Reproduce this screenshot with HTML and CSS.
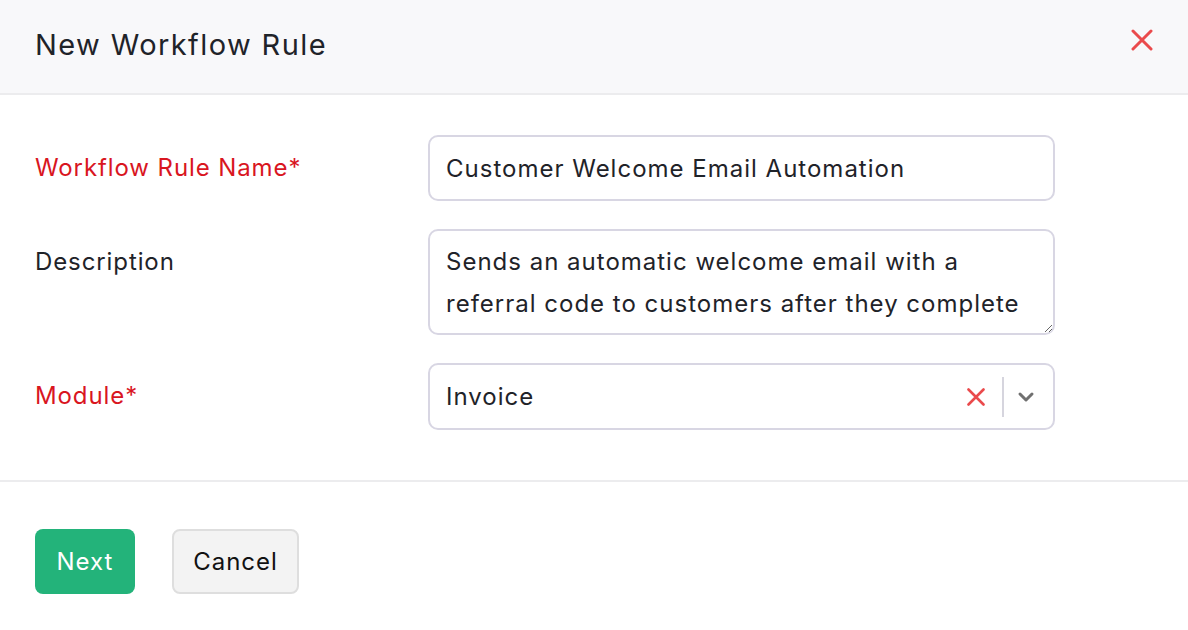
FILE: index.html
```html
<!DOCTYPE html>
<html lang="en">
<head>
<meta charset="utf-8">
<title>New Workflow Rule</title>
<link rel="stylesheet" href="styles.css">
</head>
<body>
<div class="modal">
  <header class="modal-header">
    <h1 class="modal-title">New Workflow Rule</h1>
    <button class="close-btn" aria-label="Close">
      <svg width="22" height="22" viewBox="0 0 22 22"><path d="M2 2L20 20M20 2L2 20" stroke="#ea4a4c" stroke-width="3" stroke-linecap="round"/></svg>
    </button>
  </header>
  <main class="modal-body">
    <div class="form-row">
      <label class="field-label required">Workflow Rule Name*</label>
      <input class="text-input" type="text" value="Customer Welcome Email Automation">
    </div>
    <div class="form-row">
      <label class="field-label">Description</label>
      <textarea class="text-area">Sends an automatic welcome email with a referral code to customers after they complete their first purchase.</textarea>
    </div>
    <div class="form-row">
      <label class="field-label required">Module*</label>
      <div class="select-box">
        <span class="select-value">Invoice</span>
        <span class="select-clear">
          <svg width="18" height="18" viewBox="0 0 18 18"><path d="M1.5 1.5L16.5 16.5M16.5 1.5L1.5 16.5" stroke="#ea4a4c" stroke-width="2.6" stroke-linecap="round"/></svg>
        </span>
        <span class="select-divider"></span>
        <span class="select-arrow">
          <svg width="18" height="12" viewBox="0 0 18 12"><path d="M3 3L9 9L15 3" fill="none" stroke="#707070" stroke-width="3" stroke-linecap="round" stroke-linejoin="round"/></svg>
        </span>
      </div>
    </div>
  </main>
  <footer class="modal-footer">
    <button class="btn btn-primary">Next</button>
    <button class="btn btn-secondary">Cancel</button>
  </footer>
</div>
</body>
</html>
```

FILE: styles.css
```css
* { box-sizing: border-box; }
html, body { margin: 0; padding: 0; background: #ffffff; }
body {
  font-family: "Inter", "Noto Sans", sans-serif;
  letter-spacing: 1px;
  color: #1f2329;
  width: 1188px;
  height: 630px;
  overflow: hidden;
}
.modal { display: flex; flex-direction: column; }
.modal-header {
  height: 95px;
  background: #f8f8fa;
  border-bottom: 2px solid #ececee;
  display: flex;
  align-items: center;
  justify-content: space-between;
  padding: 0 35px 5px 35px;
}
.modal-title {
  margin: 0;
  font-size: 29px;
  font-weight: 400;
  letter-spacing: 1.4px;
  color: #1f2329;
}
.close-btn {
  background: none;
  border: 0;
  padding: 0;
  width: 22px;
  height: 22px;
  margin: 0 0 8px 0;
  display: flex;
  cursor: pointer;
}
.modal-body {
  padding: 40px 133px 50px 35px;
  display: flex;
  flex-direction: column;
  gap: 28px;
  border-bottom: 2px solid #ececee;
}
.form-row {
  display: grid;
  grid-template-columns: 393px 627px;
  align-items: start;
}
.field-label {
  font-size: 24px;
  line-height: 42px;
  padding-top: 12px;
  letter-spacing: 0.9px;
  color: #1f2329;
}
.field-label.required { color: #d9161f; }
.text-input, .text-area, .select-box {
  width: 627px;
  border: 2px solid #d8d6e3;
  border-radius: 10px;
  background: #fff;
  font-family: "Inter", "Noto Sans", sans-serif;
  font-size: 24px;
  letter-spacing: 1px;
  color: #1f2329;
}
.text-input {
  height: 66px;
  padding: 0 16px;
  outline: none;
}
.text-area {
  height: 106px;
  padding: 10px 16px 8px 16px;
  line-height: 42px;
  resize: vertical;
  overflow: hidden;
  outline: none;
  display: block;
}
.select-box {
  height: 67px;
  display: flex;
  align-items: center;
  padding: 0 18px 0 16px;
}
.select-value { flex: 1; line-height: 42px; }
.select-clear { display: flex; margin-right: 17px; }
.select-divider {
  width: 2px;
  height: 40px;
  background: #d6d5de;
  margin-right: 13px;
}
.select-arrow { display: flex; }
.modal-footer {
  padding: 47px 35px 0 35px;
  display: flex;
  gap: 37px;
}
.btn {
  font-family: "Inter", "Noto Sans", sans-serif;
  font-size: 24px;
  letter-spacing: 1px;
  height: 65px;
  border-radius: 8px;
  padding: 0 6px;
  cursor: pointer;
}
.btn-primary {
  background: #23b37a;
  color: #ffffff;
  border: 0;
  width: 100px;
}
.btn-secondary {
  background: #f3f3f3;
  color: #111111;
  border: 2px solid #dedede;
  width: 127px;
}
```
